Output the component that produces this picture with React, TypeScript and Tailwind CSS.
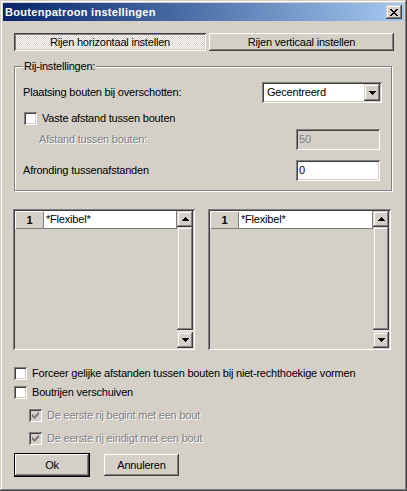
import React from "react";

// classic 3d edges
const raised = "shadow-[inset_-1px_-1px_0_#404040,inset_1px_1px_0_#fff,inset_-2px_-2px_0_#808080]";
const scrollBtn = "shadow-[inset_-1px_-1px_0_#404040,inset_1px_1px_0_#d4d0c8,inset_-2px_-2px_0_#808080,inset_2px_2px_0_#fff]";
const sunken = "shadow-[inset_1px_1px_0_#808080,inset_-1px_-1px_0_#fff,inset_2px_2px_0_#404040,inset_-2px_-2px_0_#d4d0c8]";
const disabledText = "text-[#808080] [text-shadow:1px_1px_0_#fff]";

const ArrowDown = () => (
  <svg width="7" height="4" viewBox="0 0 7 4" shapeRendering="crispEdges">
    <path d="M0 0h7v1H0zM1 1h5v1H1zM2 2h3v1H2zM3 3h1v1H3z" fill="#000" />
  </svg>
);

const ArrowUp = () => (
  <svg width="7" height="4" viewBox="0 0 7 4" shapeRendering="crispEdges">
    <path d="M3 0h1v1H3zM2 1h3v1H2zM1 2h5v1H1zM0 3h7v1H0z" fill="#000" />
  </svg>
);

const Checkbox = ({ checked = false, disabled = false }: { checked?: boolean; disabled?: boolean }) => (
  <span
    className={`w-[13px] h-[13px] shrink-0 flex items-center justify-center ${sunken} ${
      disabled ? "bg-[#d4d0c8]" : "bg-white"
    }`}
  >
    {checked && (
      <svg width="7" height="7" viewBox="0 0 7 7" shapeRendering="crispEdges">
        <path
          d="M6 0h1v1H6zM5 1h2v1H5zM0 2h1v1H0zM4 2h3v1H4zM0 3h2v1H0zM3 3h3v1H3zM0 4h5v1H0zM1 5h3v1H1zM2 6h1v1H2z"
          fill={disabled ? "#808080" : "#000"}
        />
      </svg>
    )}
  </span>
);

const CheckRow = ({
  label,
  checked,
  disabled,
  className = "",
}: {
  label: string;
  checked?: boolean;
  disabled?: boolean;
  className?: string;
}) => (
  <div className={`flex items-center gap-[5px] h-[13px] ${className}`}>
    <Checkbox checked={checked} disabled={disabled} />
    <span className={`leading-none whitespace-nowrap ${disabled ? disabledText : ""}`}>{label}</span>
  </div>
);

const RowList = ({ className = "" }: { className?: string }) => (
  <div className={`h-[141px] p-[2px] flex bg-[#d4d0c8] ${sunken} ${className}`}>
    <div className="flex-1 flex flex-col">
      <div className="flex h-[18px]">
        <div className="w-[29px] flex items-center justify-center font-bold shadow-[inset_1px_1px_0_#fff,inset_-1px_-1px_0_#808080]">
          1
        </div>
        <div className="flex-1 bg-white border-r border-b border-[#808080] flex items-center pl-[2px]">
          *Flexibel*
        </div>
      </div>
    </div>
    <div className="w-[16px] flex flex-col">
      <div className={`h-[16px] flex items-center justify-center ${scrollBtn}`}>
        <ArrowUp />
      </div>
      <div className={`flex-1 ${scrollBtn}`} />
      <div className="h-[2px] bg-[image:conic-gradient(#fff_25%,#d4d0c8_0_50%,#fff_0_75%,#d4d0c8_0)] bg-[length:2px_2px]" />
      <div className={`h-[16px] flex items-center justify-center ${scrollBtn}`}>
        <ArrowDown />
      </div>
    </div>
  </div>
);

export default function App() {
  return (
    <div
      className={`w-[407px] h-[491px] p-[3px] flex flex-col bg-[#d4d0c8] text-[11px] tracking-[-0.2px] text-black font-['Liberation_Sans',Arial,sans-serif] shadow-[inset_-1px_-1px_0_#404040,inset_1px_1px_0_#d4d0c8,inset_-2px_-2px_0_#808080,inset_2px_2px_0_#fff]`}
    >
      {/* title bar */}
      <div className="h-[18px] flex items-center pl-[2px] pr-[2px] bg-linear-to-r from-[#0a246a] to-[#a6caf0]">
        <span className="text-white font-bold leading-none tracking-[0.3px]">Boutenpatroon instellingen</span>
        <button className={`ml-auto w-[16px] h-[14px] bg-[#d4d0c8] flex items-center justify-center ${scrollBtn}`}>
          <svg width="8" height="7" viewBox="0 0 8 7" shapeRendering="crispEdges">
            <path
              d="M0 0h2v1H0zM6 0h2v1H6zM1 1h2v1H1zM5 1h2v1H5zM2 2h4v1H2zM3 3h2v1H3zM2 4h4v1H2zM1 5h2v1H1zM5 5h2v1H5zM0 6h2v1H0zM6 6h2v1H6z"
              fill="#000"
            />
          </svg>
        </button>
      </div>

      <div className="flex flex-col pl-[11px] pr-[10px]">
        {/* direction toggles */}
        <div className="mt-[12px] flex gap-[3px]">
          <div className="w-[192px] h-[18px] flex items-center justify-center bg-[image:conic-gradient(#fff_25%,#d4d0c8_0_50%,#fff_0_75%,#d4d0c8_0)] bg-[length:2px_2px] shadow-[inset_1px_1px_0_#404040,inset_-1px_-1px_0_#fff,inset_2px_2px_0_#808080,inset_-2px_-2px_0_#d4d0c8]">
            <span className="pt-px">Rijen horizontaal instellen</span>
          </div>
          <div className={`w-[185px] h-[18px] flex items-center justify-center ${raised}`}>
            Rijen verticaal instellen
          </div>
        </div>

        {/* group box */}
        <div className="relative mt-[15px] w-[378px] h-[125px] border border-[#808080] shadow-[inset_1px_1px_0_#fff,1px_1px_0_#fff] pt-[15px] pb-[9px] pl-[8px] pr-[9px] flex flex-col">
          <span className="absolute left-[8px] top-[-7px] px-[1px] bg-[#d4d0c8] leading-[13px]">Rij-instellingen:</span>

          <div className="h-[21px] flex items-center">
            <span>Plaatsing bouten bij overschotten:</span>
            <div className={`ml-auto w-[120px] h-[21px] p-[2px] flex bg-white ${sunken}`}>
              <span className="flex-1 flex items-center pl-[3px]">Gecentreerd</span>
              <span className={`w-[16px] bg-[#d4d0c8] flex items-center justify-center ${scrollBtn}`}>
                <ArrowDown />
              </span>
            </div>
          </div>

          <CheckRow className="mt-[9px] ml-[1px]" label="Vaste afstand tussen bouten" />

          <div className="mt-[4px] h-[21px] flex items-center pr-[2px]">
            <span className={`ml-[16px] ${disabledText}`}>Afstand tussen bouten:</span>
            <div className={`ml-auto w-[84px] h-[21px] p-[2px] pl-[3px] flex items-center bg-[#d4d0c8] text-[#808080] ${sunken}`}>
              50
            </div>
          </div>

          <div className="mt-[10px] h-[21px] flex items-center pr-[2px]">
            <span>Afronding tussenafstanden</span>
            <div className={`ml-auto w-[84px] h-[21px] p-[2px] pl-[3px] flex items-center bg-white ${sunken}`}>0</div>
          </div>
        </div>

        {/* row lists */}
        <div className="mt-[18px] -ml-px flex gap-[13px]">
          <RowList className="w-[182px]" />
          <RowList className="w-[183px]" />
        </div>

        {/* options */}
        <CheckRow className="mt-[17px]" label="Forceer gelijke afstanden tussen bouten bij niet-rechthoekige vormen" />
        <CheckRow className="mt-[6px]" label="Boutrijen verschuiven" />
        <CheckRow className="mt-[10px] ml-[15px]" label="De eerste rij begint met een bout" checked disabled />
        <CheckRow className="mt-[10px] ml-[15px]" label="De eerste rij eindigt met een bout" checked disabled />

        {/* buttons */}
        <div className="mt-[8px] flex items-start gap-[14px]">
          <div className="w-[76px] h-[24px] border border-black">
            <div className={`h-full flex items-center justify-center ${raised}`}>Ok</div>
          </div>
          <div className={`mt-px w-[75px] h-[22px] flex items-center justify-center ${raised}`}>Annuleren</div>
        </div>
      </div>
    </div>
  );
}
